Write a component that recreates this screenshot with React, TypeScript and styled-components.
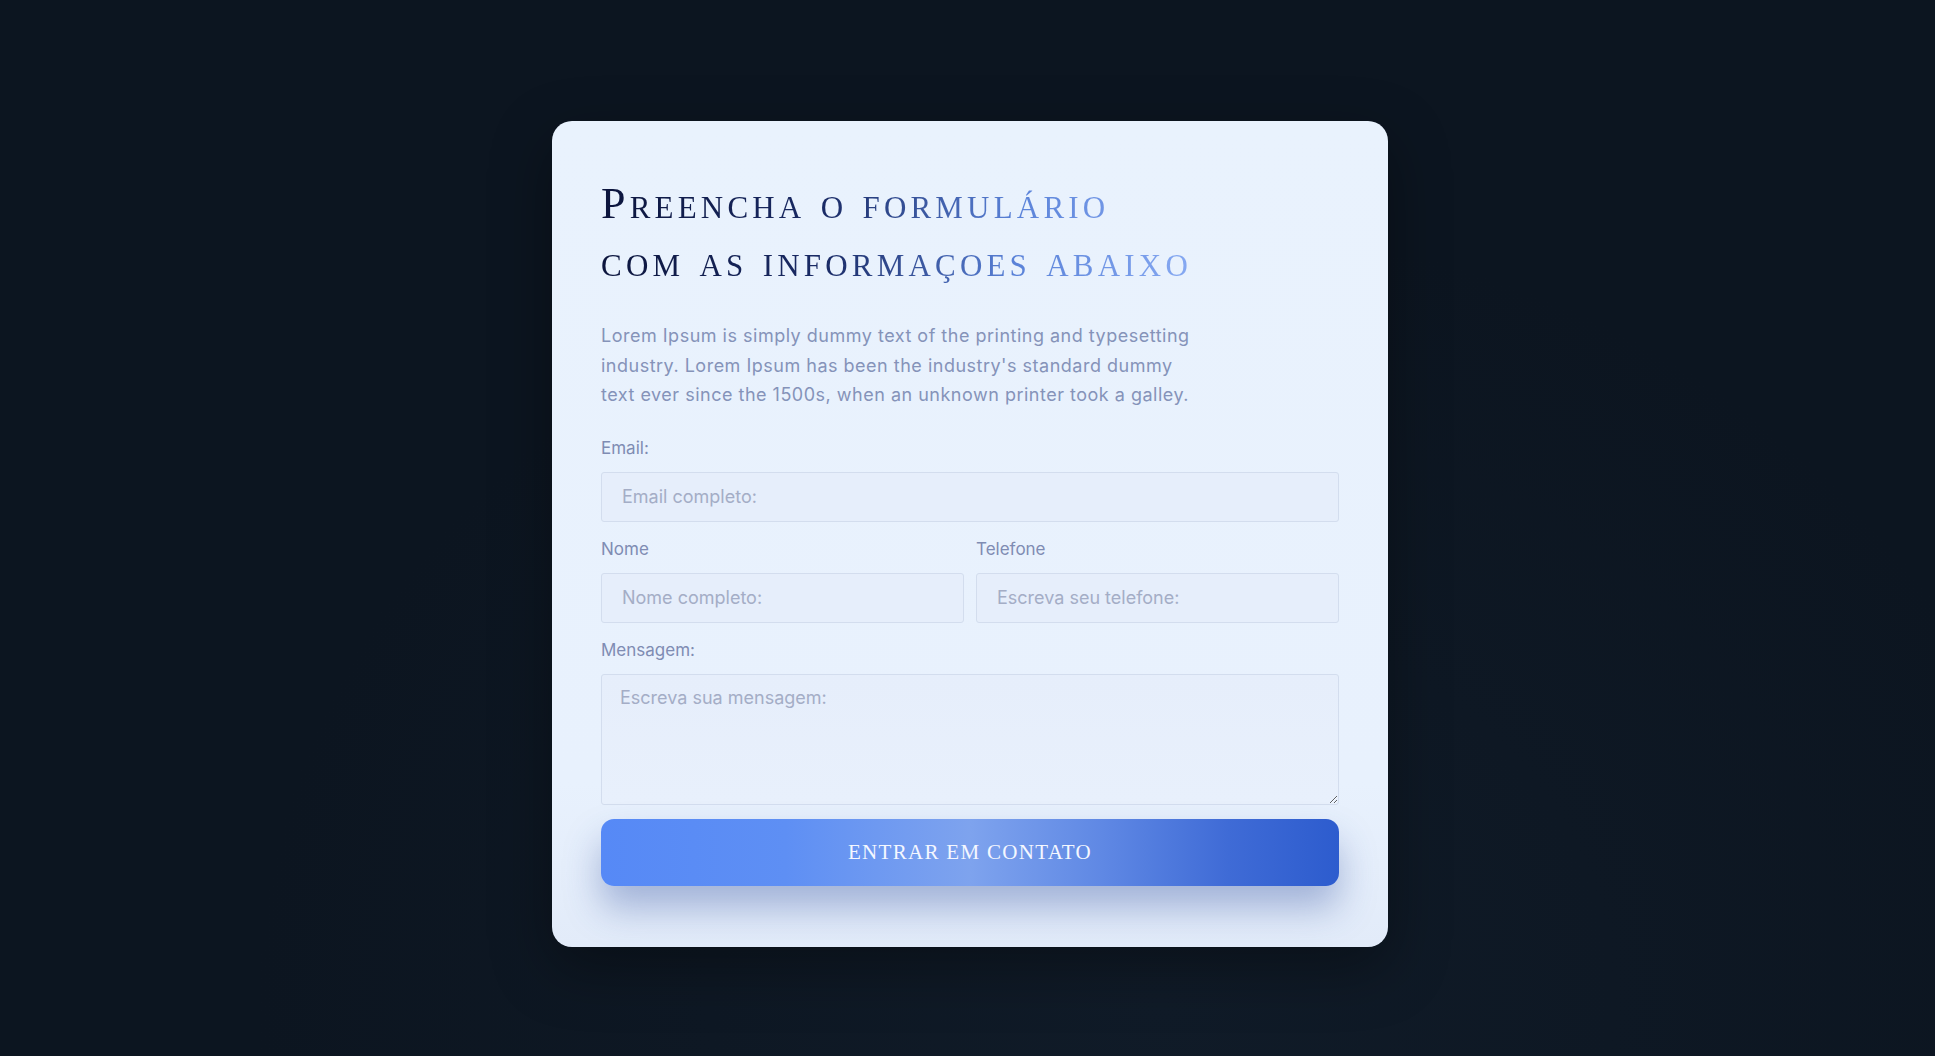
import React from "react"
import styled, { createGlobalStyle } from "styled-components"

const GlobalStyle = createGlobalStyle`
    * {
        box-sizing: border-box;
    }
    html, body {
        margin: 0;
        padding: 0;
        background: #0c1520;
    }
`

const Page = styled.div`
    min-height: 100vh;
    display: flex;
    align-items: center;
    justify-content: center;
    padding: 12px 0 0 5px;
    background: radial-gradient(ellipse at 60% 95%, #101b28 0%, #0c1520 55%);
`

const Card = styled.form`
    width: 836px;
    padding: 54px 49px 61px 49px;
    border-radius: 20px;
    background: linear-gradient(180deg, #e9f2fd 0%, #e8f1fd 80%, #e2ebf9 100%);
    box-shadow: 0 20px 60px rgba(0, 0, 0, 0.35);
    display: flex;
    flex-direction: column;
`

const Title = styled.h1`
    margin: 0;
    width: fit-content;
    font-family: "Liberation Serif", "DejaVu Serif", serif;
    font-variant: small-caps;
    font-weight: 400;
    font-size: 44px;
    line-height: 58px;
    letter-spacing: 4.2px;
    background: linear-gradient(90deg, #0c153d 0%, #1a2b66 38%, #5a82d8 70%, #86a9f2 100%);
    -webkit-background-clip: text;
    background-clip: text;
    color: transparent;
`

const Intro = styled.p`
    margin: 30px 0 26px 0;
    max-width: 600px;
    font-family: "Inter", "Open Sans", sans-serif;
    font-size: 18px;
    letter-spacing: 0.5px;
    line-height: 29.5px;
    color: #8593b9;
`

const Fields = styled.div`
    display: flex;
    flex-direction: column;
    gap: 15px;
`

const Row = styled.div`
    display: grid;
    grid-template-columns: 1fr 1fr;
    gap: 12px;
`

const Field = styled.label`
    display: flex;
    flex-direction: column;
    gap: 12px;
`

const Label = styled.span`
    font-family: "Inter", "Open Sans", sans-serif;
    font-size: 17px;
    line-height: 24px;
    color: #7f8cb3;
`

const inputBase = `
    width: 100%;
    border: 1px solid #d3ddee;
    border-radius: 3px;
    background: #e6eefb;
    font-family: "Inter", "Open Sans", sans-serif;
    font-size: 18px;
    color: #4a557a;
    outline: none;
    &::placeholder {
        color: #a4adc6;
    }
`

const Input = styled.input`
    ${inputBase}
    height: 50px;
    padding: 0 20px;
`

const TextArea = styled.textarea`
    ${inputBase}
    height: 131px;
    padding: 12px 18px;
    resize: vertical;
    background: linear-gradient(180deg, #e6eefb 0%, #e8f0fc 100%);
`

const Button = styled.button`
    margin-top: 14px;
    height: 67px;
    border: none;
    border-radius: 13px;
    background: linear-gradient(90deg, #5689f6 0%, #5e8ff4 25%, #7ea3ee 50%, #5f88e4 68%, #3f6bd6 85%, #2d5cce 100%);
    box-shadow: 0 22px 36px rgba(55, 85, 160, 0.38);
    color: #f4f7ff;
    font-family: "Liberation Serif", "DejaVu Serif", serif;
    font-size: 21px;
    letter-spacing: 1.3px;
    text-transform: uppercase;
    cursor: pointer;
`

export default function App() {
    return (
        <>
            <GlobalStyle />
            <Page>
                <Card onSubmit={(e) => e.preventDefault()}>
                    <Title>
                        Preencha o formulário
                        <br />
                        com as informaçoes abaixo
                    </Title>
                    <Intro>
                        Lorem Ipsum is simply dummy text of the printing and typesetting industry. Lorem Ipsum has been the
                        industry's standard dummy text ever since the 1500s, when an unknown printer took a galley.
                    </Intro>
                    <Fields>
                        <Field>
                            <Label>Email:</Label>
                            <Input type="email" placeholder="Email completo:" />
                        </Field>
                        <Row>
                            <Field>
                                <Label>Nome</Label>
                                <Input type="text" placeholder="Nome completo:" />
                            </Field>
                            <Field>
                                <Label>Telefone</Label>
                                <Input type="tel" placeholder="Escreva seu telefone:" />
                            </Field>
                        </Row>
                        <Field>
                            <Label>Mensagem:</Label>
                            <TextArea placeholder="Escreva sua mensagem:" />
                        </Field>
                    </Fields>
                    <Button type="submit">Entrar em contato</Button>
                </Card>
            </Page>
        </>
    )
}
